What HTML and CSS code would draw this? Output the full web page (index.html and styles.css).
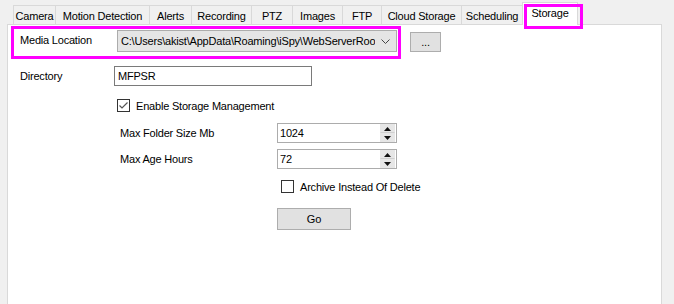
FILE: index.html
```html
<!DOCTYPE html>
<html>
<head>
  <link rel="stylesheet" href="styles.css">
</head>
<body>
  <div class="tabs">
    <div class="tab tab-camera">Camera</div>
    <div class="tab tab-motion">Motion Detection</div>
    <div class="tab tab-alerts">Alerts</div>
    <div class="tab tab-recording">Recording</div>
    <div class="tab tab-ptz">PTZ</div>
    <div class="tab tab-images">Images</div>
    <div class="tab tab-ftp">FTP</div>
    <div class="tab tab-cloud">Cloud Storage</div>
    <div class="tab tab-scheduling">Scheduling</div>
    <div class="tab selected">Storage</div>
  </div>
  <div class="mark mark-tab"></div>

  <div class="panel">
    <div class="row-media">
      <div class="media-box">
        <span class="media-label">Media Location</span>
        <div class="combo">
          <span class="combo-text">C:\Users\akist\AppData\Roaming\iSpy\WebServerRoot\Media\</span>
          <svg class="chevron" width="9" height="5" viewBox="0 0 9 5"><path d="M0.5 0.5 L4.5 4.5 L8.5 0.5" fill="none" stroke="#444" stroke-width="1"/></svg>
        </div>
      </div>
      <button class="btn btn-browse">...</button>
    </div>

    <div class="row-dir">
      <span class="dir-label">Directory</span>
      <input class="textbox" type="text" value="MFPSR">
    </div>

    <label class="check check-enable">
      <span class="box">
        <svg width="11" height="11" viewBox="0 0 11 11"><path d="M1.5 5.5 L4 8 L9.5 2.5" fill="none" stroke="#555" stroke-width="1.2"/></svg>
      </span>
      Enable Storage Management
    </label>

    <div class="limits">
      <span class="limit-label">Max Folder Size Mb</span>
      <div class="numeric">
        <span class="num-value">1024</span>
        <div class="spin">
          <span class="spin-up"><svg width="7" height="4" viewBox="0 0 7 4"><path d="M3.5 0 L7 4 L0 4 Z" fill="#111"/></svg></span>
          <span class="spin-down"><svg width="7" height="4" viewBox="0 0 7 4"><path d="M0 0 L7 0 L3.5 4 Z" fill="#111"/></svg></span>
        </div>
      </div>
      <span class="limit-label">Max Age Hours</span>
      <div class="numeric">
        <span class="num-value">72</span>
        <div class="spin">
          <span class="spin-up"><svg width="7" height="4" viewBox="0 0 7 4"><path d="M3.5 0 L7 4 L0 4 Z" fill="#111"/></svg></span>
          <span class="spin-down"><svg width="7" height="4" viewBox="0 0 7 4"><path d="M0 0 L7 0 L3.5 4 Z" fill="#111"/></svg></span>
        </div>
      </div>
    </div>

    <label class="check check-archive">
      <span class="box"></span>
      Archive Instead Of Delete
    </label>

    <button class="btn btn-go">Go</button>
  </div>
</body>
</html>
```

FILE: styles.css
```css
body {
  margin: 0;
  height: 304px;
  overflow: hidden;
  background: #f0f0f0;
  font-family: "Liberation Sans", Arial, sans-serif;
  font-size: 11px;
  letter-spacing: -0.2px;
  color: #000;
  position: relative;
}

.tabs {
  display: flex;
  align-items: flex-end;
  padding: 5px 0 0 13px;
  height: 19px;
}

.tab {
  box-sizing: border-box;
  height: 19px;
  line-height: 20px;
  text-align: center;
  border: 1px solid #d9d9d9;
  border-left: none;
  border-bottom: none;
  background: #f0f0f0;
  white-space: nowrap;
}

.tab:first-child {
  border-left: 1px solid #d9d9d9;
}

.tab-camera { width: 43px; }
.tab-motion { width: 94px; }
.tab-alerts { width: 42px; }
.tab-recording { width: 60px; }
.tab-ptz { width: 41px; }
.tab-images { width: 50px; }
.tab-ftp { width: 39px; }
.tab-cloud { width: 80px; }
.tab-scheduling { width: 61px; }

.tab.selected {
  width: 56px;
  height: 23px;
  line-height: 20px;
  margin-bottom: -1px;
  margin-left: -1px;
  border-left: 1px solid #d9d9d9;
  background: #fff;
  position: relative;
  z-index: 1;
}

.mark {
  position: absolute;
  border: 3px solid #ff00ff;
  box-sizing: border-box;
}

.mark-tab {
  left: 524px;
  top: 4px;
  width: 59px;
  height: 25px;
  z-index: 2;
}

.panel {
  margin-left: 7px;
  width: 655px;
  height: 290px;
  box-sizing: border-box;
  background: #fff;
  border: 1px solid #d9d9d9;
  border-bottom: none;
}

.row-media {
  display: flex;
  align-items: flex-start;
  margin: 1px 0 0 3px;
}

.media-box {
  display: flex;
  align-items: flex-start;
  width: 390px;
  height: 33px;
  box-sizing: border-box;
  border: 3px solid #ff00ff;
}

.media-label {
  margin: 5px 0 0 6px;
  width: 97px;
}

.combo {
  display: flex;
  align-items: center;
  width: 280px;
  height: 22px;
  margin-top: 1px;
  box-sizing: border-box;
  border: 1px solid #acacac;
  background: #e5e5e5;
  padding: 0 6px 0 3px;
  overflow: hidden;
}

.combo-text {
  flex: 1;
  white-space: nowrap;
  overflow: hidden;
}

.chevron {
  margin-left: 6px;
  flex: none;
}

.btn {
  box-sizing: border-box;
  border: 1px solid #adadad;
  background: #e1e1e1;
  font-family: inherit;
  font-size: 11px;
  letter-spacing: inherit;
  color: #000;
  padding: 0;
}

.btn-browse {
  width: 31px;
  height: 20px;
  margin: 6px 0 0 9px;
  line-height: 12px;
}

.row-dir {
  display: flex;
  align-items: center;
  margin: 7px 0 0 12px;
}

.dir-label {
  width: 94px;
}

.textbox {
  box-sizing: border-box;
  width: 198px;
  height: 20px;
  border: 1px solid #7a7a7a;
  padding: 0 3px;
  font-family: inherit;
  font-size: 11px;
  letter-spacing: inherit;
  outline: none;
}

.check {
  display: flex;
  align-items: center;
  gap: 6px;
}

.box {
  box-sizing: border-box;
  width: 13px;
  height: 13px;
  border: 1px solid #333;
  background: #fff;
  display: flex;
  align-items: center;
  justify-content: center;
}

.check-enable {
  margin: 13px 0 0 109px;
}

.limits {
  display: grid;
  grid-template-columns: 157px 120px;
  row-gap: 6px;
  align-items: center;
  margin: 11px 0 0 112px;
}

.numeric {
  box-sizing: border-box;
  height: 20px;
  border: 1px solid #acacac;
  display: flex;
  align-items: center;
  padding-left: 2px;
}

.num-value {
  flex: 1;
}

.spin {
  display: flex;
  flex-direction: column;
  width: 15px;
  height: 18px;
  margin-right: 1px;
}

.spin-up, .spin-down {
  flex: 1;
  display: flex;
  align-items: center;
  justify-content: center;
  background: #e6e6e6;
  border: 1px solid #e6e6e6;
}

.spin-up {
  border-bottom-color: #cfcfcf;
}

.check-archive {
  margin: 11px 0 0 273px;
}

.btn-go {
  display: block;
  width: 74px;
  height: 22px;
  margin: 15px 0 0 269px;
}
```
